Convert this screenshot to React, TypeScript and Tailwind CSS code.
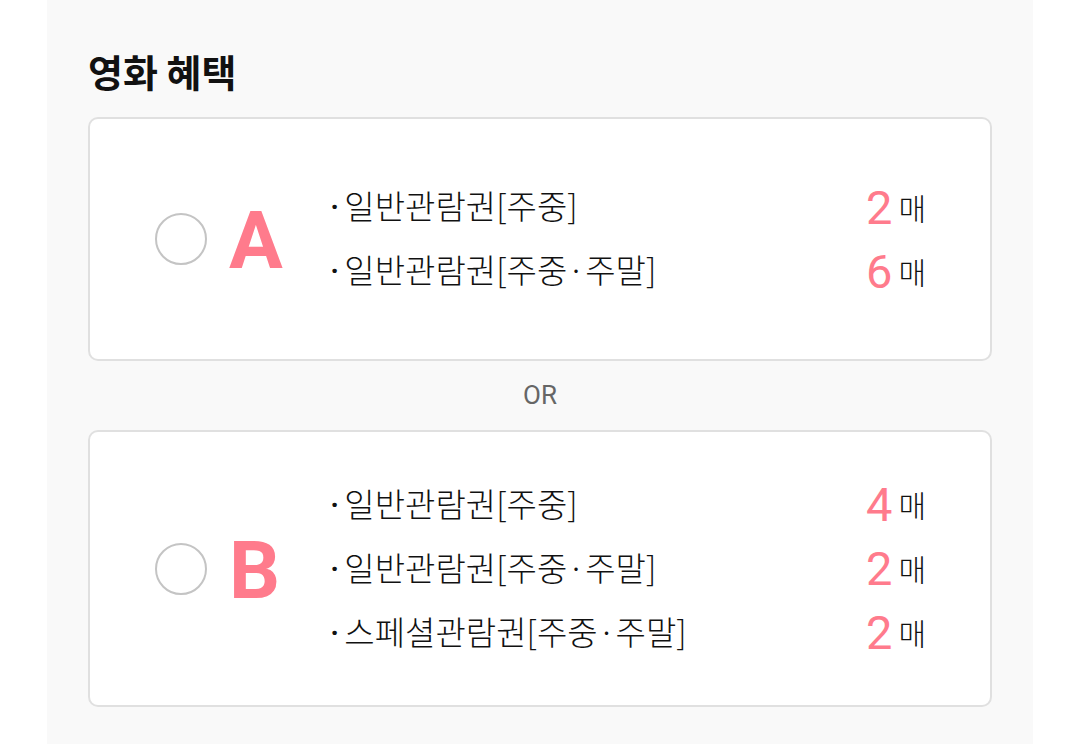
import React from "react";

type Item = { name: string; count: number };

const options: { key: string; items: Item[]; height: string }[] = [
  {
    key: "A",
    height: "h-[244px]",
    items: [
      { name: "일반관람권[주중]", count: 2 },
      { name: "일반관람권[주중·주말]", count: 6 },
    ],
  },
  {
    key: "B",
    height: "h-[277px]",
    items: [
      { name: "일반관람권[주중]", count: 4 },
      { name: "일반관람권[주중·주말]", count: 2 },
      { name: "스페셜관람권[주중·주말]", count: 2 },
    ],
  },
];

const kr = { fontFamily: '"Noto Sans CJK KR", sans-serif' };
const latin = { fontFamily: 'Roboto, "Noto Sans CJK KR", sans-serif' };

function OptionCard(props: { letter: string; items: Item[]; height: string }) {
  const { letter, items, height } = props;
  return (
    <div
      className={`flex items-center rounded-[10px] border-2 border-[#e0e0e0] bg-white pl-[65px] pr-[64px] ${height}`}
    >
      <div className="h-[52px] w-[52px] shrink-0 rounded-full border-2 border-[#c4c4c4]" />
      <div
        className="ml-[22px] w-[101px] shrink-0 pt-[4px] text-[80px] font-bold leading-none text-[#ff7b8c]"
        style={latin}
      >
        {letter}
      </div>
      <div className="flex flex-1 flex-col">
        {items.map((item, i) => (
          <div key={i} className="flex h-[64px] items-center justify-between">
            <span className="text-[33px] font-light text-[#111]">
              <span className="mr-[5px] font-medium" style={latin}>·</span>
              <span style={kr}>{item.name}</span>
            </span>
            <span className="flex items-center">
              <span className="text-[47px] leading-none text-[#ff7b8c]" style={latin}>
                {item.count}
              </span>
              <span className="ml-[6px] text-[30px] font-light text-[#111]" style={kr}>
                매
              </span>
            </span>
          </div>
        ))}
      </div>
    </div>
  );
}

export default function App() {
  return (
    <div className="min-h-[744px] bg-white" style={latin}>
      <div className="ml-[47px] min-h-[744px] w-[986px] bg-[#f9f9f9] px-[41px] pt-[48px]">
        <h2 className="text-[38px] font-bold leading-[46px] text-[#111]" style={kr}>
          영화 혜택
        </h2>
        <div className="mt-[23px]">
          <OptionCard letter={options[0].key} items={options[0].items} height={options[0].height} />
          <div className="flex h-[69px] items-center justify-center text-[26px] text-[#666]">OR</div>
          <OptionCard letter={options[1].key} items={options[1].items} height={options[1].height} />
        </div>
      </div>
    </div>
  );
}
